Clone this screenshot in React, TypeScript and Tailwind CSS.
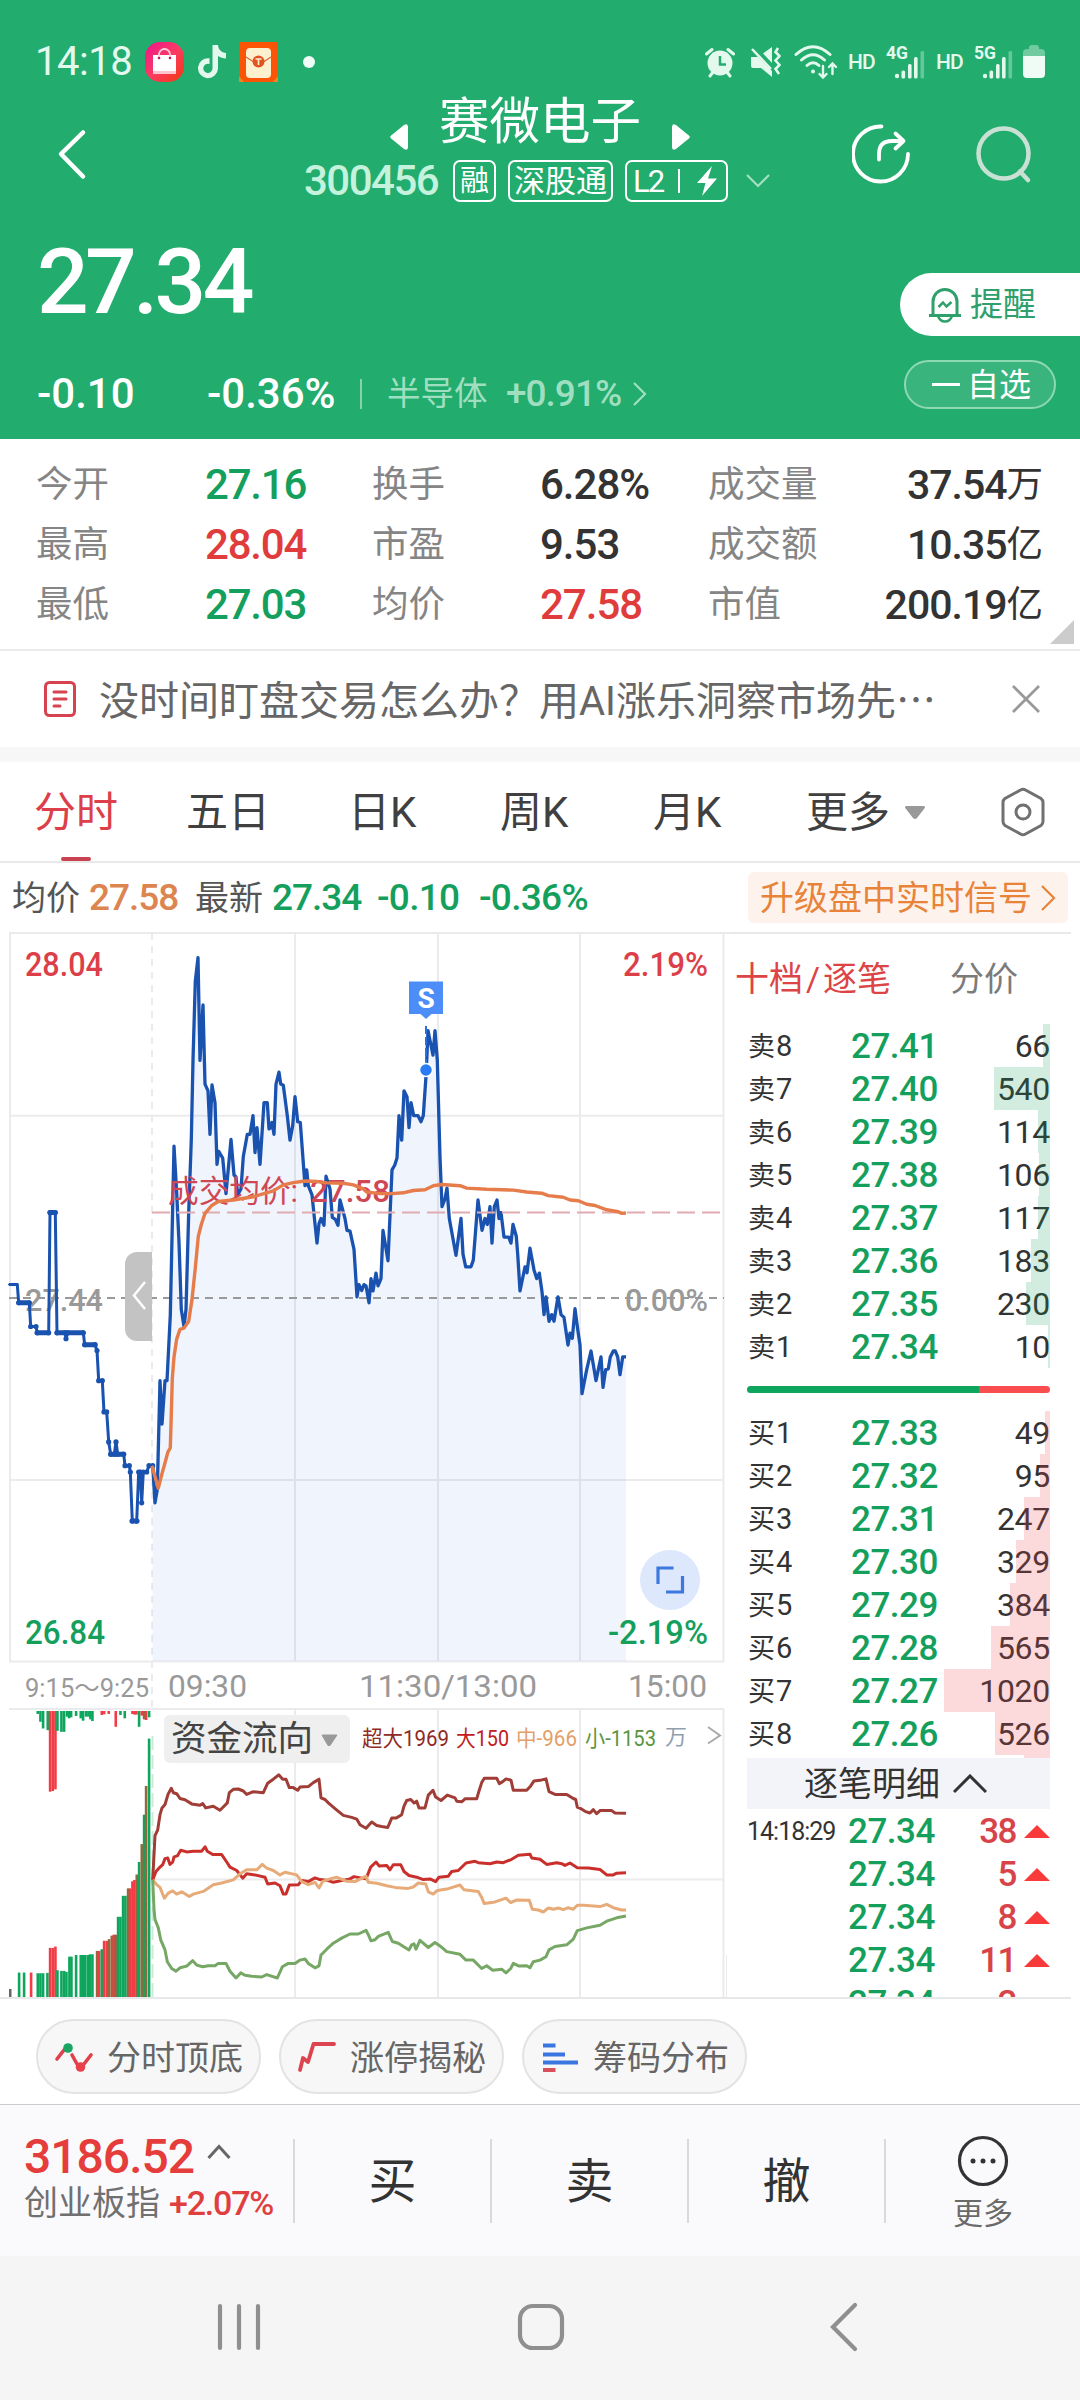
import type { ReactNode } from 'react';

type Pt = [number, number];

/* ---------- chart helpers ---------- */

const toPoints = (raw: string, shiftX: number, baseY: number, unitY: number): Pt[] =>
  raw
    .trim()
    .split(/\s+/)
    .map((p) => {
      const [x, y] = p.split(',').map(Number);
      return [shiftX + x / 3, baseY + y / unitY] as Pt;
    });

const toPath = (pts: Pt[]) =>
  pts.map(([x, y], i) => `${i ? 'L' : 'M'}${x.toFixed(1)} ${y.toFixed(1)}`).join('');

const PRICE_UNIT = 2.529;
const FLOW_UNIT = 2.958;
const morning = (raw: string) => toPoints(raw, 0, 920, PRICE_UNIT);
const afternoon = (raw: string) => toPoints(raw, 360, 920, PRICE_UNIT);
const flowA = (raw: string) => toPoints(raw, 0, 1480, FLOW_UNIT);
const flowB = (raw: string) => toPoints(raw, 340, 1480, FLOW_UNIT);

const auction = morning(
  '27,922 52,922 56,968 88,968 92,1028 108,1028 112,1044 146,1044 150,740 166,740 171,1044 195,1044 198,1059 203,1044 250,1044 254,1074 285,1074 291,1089 296,1165 307,1165 312,1244 320,1244 326,1320 332,1351 343,1351 348,1320 353,1351 371,1351 375,1380 388,1380 391,1396 397,1520 410,1520 416,1396 421,1396 425,1474 430,1396 440,1396 447,1380 458,1380',
);

const price = [
  ...morning(
    '458,1380 465,1474 472,1440 480,1165 486,1275 495,1165 501,1165 511,1000 522,572 530,690 537,815 544,985 552,1028 558,985 566,740 574,555 579,355 586,155 594,95 600,355 609,215 615,415 624,432 630,542 636,417 645,462 651,618 656,585 668,602 678,692 693,555 702,645 708,650 713,695 723,680 730,598 742,542 750,542 759,495 765,588 771,525 780,618 792,462 802,462 807,528 812,525 816,512 822,542 828,415 837,385 842,415 850,418 862,495 870,557 878,520 885,447 893,510 901,512 915,672 920,632 925,672 936,695 951,817 957,768 963,755 972,772 978,648 990,680 997,752 1006,757 1014,772 1020,708 1035,755 1041,785 1050,787 1062,833 1071,953 1077,922 1085,937 1092,922 1098,925',
  ),
  ...afternoon(
    '27,968 33,907 39,938 48,893 54,925 63,907 69,785 84,862 96,632 104,620 111,602 117,495 125,557 132,432 141,447 147,525 153,462 161,495 174,495 183,510 190,495 198,395 201,340 204,280 219,342 225,280 232,355 240,600 246,725 255,705 261,678 268,755 288,848 303,755 309,845 317,877 333,877 340,860 354,708 366,785 375,755 382,770 390,725 396,817 403,725 411,708 417,755 423,740 432,802 446,802 453,817 459,770 469,800 473,845 480,938 495,877 501,892 510,830 522,885 530,907 538,893 546,940 552,998 558,953 567,1015 575,998 582,1015 594,953 603,998 612,1005 624,1075 630,1045 637,1058 645,983 653,1035 660,1075 666,1198 680,1137 693,1090 708,1165 723,1105 729,1182 737,1137 745,1135 751,1105 760,1090 766,1090 773,1105 780,1150 788,1105 798,1105',
  ),
];

const average = [
  ...morning(
    '456,1380 475,1437 486,1400 496,1370 504,1345 511,1335 514,1250 517,1160 522,1105 530,1060 540,1035 552,1032 566,1015 576,960 586,880 595,800 604,770 615,742 635,722 655,712 700,708 760,700 820,685 850,670 880,664 915,660 950,661 980,665 1030,666 1060,670 1090,680',
  ),
  ...afternoon(
    '20,688 60,692 96,692 130,690 160,684 195,682 220,672 245,669 300,672 320,678 380,681 460,683 500,688 545,691 565,697 610,701 630,708 655,710 680,719 705,722 740,733 775,738 785,742 798,741',
  ),
];

const flows = [
  {
    color: '#a03d36',
    pts: [
      ...flowA(
        '458,1183 465,1052 473,1035 480,990 486,970 495,960 504,930 514,912 520,925 530,928 540,942 555,946 575,958 600,962 608,957 617,970 640,965 660,977 672,965 682,955 688,925 700,915 715,914 730,920 740,930 760,922 790,925 803,897 820,885 836,872 848,885 858,885 868,910 880,910 893,918 900,908 925,907 940,895 957,885 963,940 975,945 985,955 1005,972 1030,992 1055,998 1070,1003 1080,1020 1098,1030 1115,1012',
      ),
      ...flowB(
        '110,1022 125,1025 143,1028 155,1000 168,1000 185,990 192,965 200,948 212,945 222,955 230,950 237,970 255,970 265,932 279,918 287,938 303,948 322,932 345,940 350,950 365,952 375,943 410,943 417,920 425,895 433,882 470,882 478,898 488,892 498,884 513,888 520,918 560,918 572,905 582,890 605,887 618,884 627,922 645,930 680,930 700,942 707,945 712,968 722,972 735,980 750,985 760,975 770,987 780,978 815,978 825,985 858,986',
      ),
    ],
  },
  {
    color: '#c9302c',
    pts: [
      ...flowA(
        '458,1183 468,1158 480,1145 488,1138 495,1120 503,1118 510,1137 518,1130 522,1115 532,1112 542,1095 560,1100 580,1098 605,1098 615,1085 622,1098 638,1108 665,1108 680,1130 690,1145 710,1155 728,1178 740,1165 765,1168 795,1175 803,1195 825,1192 840,1200 850,1225 858,1225 868,1198 895,1197 905,1185 925,1188 945,1177 960,1182 985,1185 1000,1190 1050,1180 1062,1173 1098,1180 1112,1145',
      ),
      ...flowB(
        '108,1130 118,1142 140,1140 150,1153 160,1138 182,1138 192,1158 207,1170 230,1175 250,1182 270,1180 287,1188 297,1175 325,1172 335,1158 355,1155 378,1133 405,1128 415,1132 450,1135 470,1130 490,1132 515,1122 535,1110 570,1107 575,1118 600,1122 620,1137 650,1132 665,1135 675,1140 690,1133 712,1147 745,1148 780,1152 800,1168 820,1168 830,1163 858,1162',
      ),
    ],
  },
  {
    color: '#e6ab78',
    pts: [
      ...flowA(
        '458,1183 470,1197 480,1205 493,1237 505,1222 518,1215 530,1225 545,1218 568,1232 580,1225 610,1217 640,1197 665,1192 700,1183 720,1165 740,1153 770,1153 787,1137 800,1148 820,1155 840,1168 855,1160 890,1168 905,1188 925,1197 945,1190 957,1207 968,1187 990,1180 1010,1175 1040,1187 1065,1188 1098,1172',
      ),
      ...flowB(
        '85,1190 110,1193 140,1200 165,1205 205,1208 220,1204 235,1192 257,1195 265,1218 280,1225 292,1214 320,1210 360,1198 372,1212 415,1217 425,1235 433,1253 465,1248 498,1237 512,1250 530,1242 568,1243 577,1270 595,1272 610,1278 625,1266 640,1270 655,1266 670,1271 685,1265 700,1270 712,1258 730,1258 780,1262 800,1255 820,1265 845,1272 858,1272',
      ),
    ],
  },
  {
    color: '#76a765',
    pts: [
      ...flowA(
        '458,1183 462,1270 465,1300 475,1325 482,1360 495,1390 502,1425 515,1445 528,1453 540,1443 560,1438 578,1422 590,1435 608,1440 625,1437 645,1437 655,1430 678,1430 690,1453 708,1473 722,1458 735,1465 755,1468 785,1470 800,1463 832,1473 847,1440 865,1430 885,1430 900,1420 915,1417 925,1430 945,1443 957,1437 963,1405 980,1388 1000,1370 1025,1355 1050,1343 1075,1343 1098,1332 1105,1345',
      ),
      ...flowB(
        '93,1363 105,1360 115,1350 145,1338 157,1365 175,1370 207,1390 215,1375 222,1372 228,1388 240,1362 265,1383 285,1368 300,1378 320,1395 360,1403 378,1420 400,1420 425,1445 440,1437 458,1450 485,1447 498,1458 512,1445 520,1430 537,1438 560,1437 570,1443 580,1425 600,1420 618,1410 627,1390 645,1380 680,1375 700,1358 712,1333 740,1325 780,1317 800,1305 830,1295 858,1290',
      ),
    ],
  },
];

const G = '#0da65c';
const R = '#f23c45';
const M = '#94683f';

const risingBars: [number, number, string][] = [
  [57, 1457, G], [72, 1457, G], [93, 1457, R], [113, 1459, G], [121, 1459, G], [129, 1459, G], [142, 1458, G],
  [150, 1384, R], [158, 1384, R], [166, 1380, R], [172, 1450, G], [184, 1452, G], [192, 1452, G], [199, 1455, G],
  [208, 1410, G], [214, 1410, G], [228, 1405, G], [242, 1405, G], [248, 1405, G], [255, 1405, G], [263, 1405, G],
  [270, 1403, G], [277, 1403, G], [291, 1393, M], [297, 1393, R], [305, 1388, G], [312, 1363, R], [320, 1363, R],
  [327, 1358, M], [335, 1348, M], [341, 1345, R], [347, 1345, M], [354, 1292, G], [361, 1292, G], [369, 1230, G],
  [376, 1230, G], [384, 1208, M], [390, 1208, R], [397, 1187, R], [403, 1183, R], [410, 1167, M], [417, 1130, G],
  [425, 1077, M], [432, 990, G], [438, 905, M], [447, 765, G],
];

const hangingBars: [number, number, string][] = [
  [113, 692, G], [121, 715, G], [129, 735, G], [143, 740, G], [150, 922, R], [158, 920, R], [166, 915, R],
  [172, 742, G], [184, 745, G], [192, 745, G], [201, 700, G], [207, 705, G], [213, 702, G], [228, 698, G],
  [242, 705, G], [249, 712, G], [258, 700, G], [265, 700, G], [271, 708, G], [277, 713, G], [305, 695, R],
  [312, 693, R], [326, 692, R], [347, 730, R], [361, 695, G], [374, 705, G], [397, 692, R], [403, 694, R],
  [409, 694, R], [417, 730, G], [425, 697, R], [432, 708, M], [438, 710, R], [447, 702, G],
];

const flowY = (v: number) => 1480 + v / FLOW_UNIT;

function Label(p: { x: number; y: number; w: number; size: number; fill: string; children: ReactNode; weight?: number }) {
  return (
    <text
      x={p.x}
      y={p.y}
      fontSize={p.size}
      fontWeight={p.weight ?? 500}
      fill={p.fill}
      textLength={p.w}
      lengthAdjust="spacingAndGlyphs"
    >
      {p.children}
    </text>
  );
}

function Charts() {
  const area = `${toPath(price)}V1661H152.5Z`;
  return (
    <svg className="block shrink-0" width="730" height="1067" viewBox="0 932 730 1067">
      {/* grid */}
      <g stroke="#ebebed" strokeWidth="2" fill="none">
        <path d="M9 933H730M10 933V1662M723.500 933V1662M9 1661.500H724M9 1115.700H723M9 1480H723" />
        <path d="M295 933V1661M438 933V1661M580 933V1661" />
        <path d="M9 1709H724M723.500 1709V1998M295 1709V1998M438 1709V1998M580 1709V1998M152 1879.600H723" />
        <path d="M152 933V1709" strokeDasharray="7 6" />
      </g>
      <path d="M726.500 1955V1998" stroke="#ebebed" />

      <path d={area} fill="#2a6fe0" fillOpacity="0.075" />

      <Label x={25} y={1311} w={78} size={32} fill="#999">27.44</Label>
      <Label x={625} y={1311} w={83} size={32} fill="#999">0.00%</Label>
      <path d="M9 1298H724" stroke="#999" strokeWidth="2" strokeDasharray="8 6" />

      <path d={toPath(auction)} stroke="#1a52b0" strokeWidth="3" fill="none" strokeLinejoin="round" />
      {auction.map(([x, y], i) => (
        <circle key={i} cx={x} cy={y} r={i < 2 ? 1 : 2.6} fill="#1a52b0" />
      ))}
      <path
        d="M19 1302.800H29M37 1332.800H48M50 1212.600H55M57 1332.800H83M85 1344.700H95M111 1454.200H123M132 1521H137"
        stroke="#1a52b0"
        strokeWidth="5"
        strokeLinecap="round"
      />
      <path d={toPath(price)} stroke="#1a52b0" strokeWidth="3.300" fill="none" strokeLinejoin="round" />

      <path d="M152 1212.600H722" stroke="#e2abb2" strokeWidth="2" strokeDasharray="18 7" />
      <Label x={168} y={1202} w={130} size={31} fill="#cf4655" weight={400}>成交均价:</Label>
      <Label x={310} y={1202} w={80} size={32} fill="#cf4655">27.58</Label>
      <path d={toPath(average)} stroke="#e67c4a" strokeWidth="3.400" fill="none" strokeLinejoin="round" />

      {/* trade marker */}
      <path d="M426 1026V1063" stroke="#2a6fe0" strokeWidth="2" strokeDasharray="8 3" />
      <path d="M409 981.500H443V1014H431.500L426 1019L420.500 1014H409Z" fill="#4d8df7" />
      <text x="426" y="1008" fontSize="28" fontWeight="700" fill="#fff" textAnchor="middle">S</text>
      <circle cx="426" cy="1070" r="6.500" fill="#2a7cf5" stroke="#fff" strokeWidth="1.500" />

      <Label x={25} y={976} w={78} size={33} fill="#dc3f49">28.04</Label>
      <Label x={623} y={976} w={85} size={33} fill="#dc3f49">2.19%</Label>
      <Label x={25} y={1644} w={80} size={33} fill="#159f5d">26.84</Label>
      <Label x={608} y={1644} w={100} size={33} fill="#159f5d">-2.19%</Label>

      {/* collapse handle */}
      <path d="M152 1252H137A12 12 0 0 0 125 1264V1329A12 12 0 0 0 137 1341H152Z" fill="#c3c3c3" />
      <path d="M145 1282L134 1295.500L145 1309" stroke="#fff" strokeWidth="2.500" fill="none" />

      {/* full-screen button */}
      <circle cx="670" cy="1580" r="30" fill="#dde8fd" />
      <path d="M673.500 1568H658V1584M666 1592H682.500V1576" stroke="#3c78de" strokeWidth="3.200" fill="none" />

      {/* time axis */}
      <Label x={25} y={1697} w={124} size={25} fill="#999" weight={400}>9:15～9:25</Label>
      <Label x={168} y={1697} w={79} size={32} fill="#999" weight={400}>09:30</Label>
      <Label x={359} y={1697} w={178} size={32} fill="#999" weight={400}>11:30/13:00</Label>
      <Label x={628} y={1697} w={79} size={32} fill="#999" weight={400}>15:00</Label>

      {/* call auction volume */}
      {hangingBars.map(([x, y, c]) => (
        <rect key={x} x={x / 3 - 1.2} y={1711} width="2.600" height={flowY(y) - 1711} fill={c} />
      ))}
      {risingBars.map(([x, y, c]) => (
        <rect key={x} x={x / 3 - 1.2} y={flowY(y)} width="2.600" height={1997.5 - flowY(y)} fill={c} />
      ))}
      <rect x="9" y="1989" width="2.500" height="9" fill="#666" />
      <path d="M152.500 1736V1997" stroke="#c9ecd9" strokeWidth="2" strokeDasharray="14 5" />

      {flows.map((f) => (
        <path key={f.color} d={toPath(f.pts)} stroke={f.color} strokeWidth="3" fill="none" strokeLinejoin="round" />
      ))}

      {/* flow selector and legend */}
      <rect x="164" y="1715" width="186" height="48" rx="6" fill="#efefef" />
      <Label x={171} y={1751} w={142} size={35.5} fill="#444" weight={400}>资金流向</Label>
      <path d="M322 1735H337L330 1745.500H328Z" fill="#999" stroke="#999" strokeLinejoin="round" />
      <Label x={362} y={1745.5} w={87} size={21.5} fill="#8f2a24" weight={400}>超大1969</Label>
      <Label x={456} y={1745.5} w={53} size={21.5} fill="#c02020" weight={400}>大150</Label>
      <Label x={516} y={1745.5} w={61} size={21.5} fill="#e3a068" weight={400}>中-966</Label>
      <Label x={585} y={1745.5} w={71} size={21.5} fill="#5b9440" weight={400}>小-1153</Label>
      <Label x={665} y={1744} w={22} size={21} fill="#8f9fb0" weight={400}>万</Label>
      <path d="M708 1727L720 1735.500L708 1743.500" stroke="#aaa" strokeWidth="2" fill="none" />
      <path d="M0 1998H730" stroke="#e8e8ea" strokeWidth="2" />
    </svg>
  );
}

/* ---------- status bar ---------- */

function Signal({ tag }: { tag: string }) {
  return (
    <svg className="overflow-visible" width="40" height="36" viewBox="0 0 40 36" fill="#e4f9ee">
      <text x="0" y="15" fontSize="18" fontWeight="700" textLength="22" lengthAdjust="spacingAndGlyphs">{tag}</text>
      <circle cx="11" cy="32" r="2.200" />
      <rect x="15.500" y="26.500" width="3.600" height="8" rx="1.500" />
      <rect x="22" y="20" width="3.600" height="14.500" rx="1.500" />
      <rect x="28" y="13" width="3.600" height="21.500" rx="1.500" />
      <rect x="34.500" y="7" width="3.600" height="27.500" rx="1.500" opacity=".35" />
    </svg>
  );
}

function StatusBar() {
  return (
    <div className="mt-[32px] flex h-[60px] shrink-0 items-center pl-[35px] text-[#e4f9ee]">
      <span className="w-[110px] text-[40px] leading-none tracking-[-0.500px]">14:18</span>
      <svg width="39" height="40" viewBox="0 0 39 40">
        <defs>
          <linearGradient id="bag" x1="0" y1="0" x2="1" y2="1">
            <stop offset="0" stopColor="#ee1290" />
            <stop offset=".5" stopColor="#fb3b63" />
            <stop offset="1" stopColor="#f2390c" />
          </linearGradient>
        </defs>
        <rect width="39" height="40" rx="15" fill="url(#bag)" />
        <path d="M8 13H31V32H8Z" fill="#fff" />
        <path d="M14 15V12.500A5.500 5.500 0 0 1 25 12.500V15" stroke="#fcd" strokeWidth="1.800" fill="none" />
        <path d="M8 29H31V32H8Z" fill="#fbc5cf" />
        <circle cx="14" cy="16" r="1.300" fill="#c2185b" />
        <circle cx="25" cy="16" r="1.300" fill="#c2185b" />
      </svg>
      <svg className="ml-[14px]" width="28" height="34" viewBox="0 0 28 34" fill="#e4f9ee">
        <path d="M14.500 0H20C20.300 4.500 23.500 7.700 28 8V13.500C25 13.500 22.300 12.600 20 11V23.500A10 10 0 1 1 11.500 13.300V19A4.600 4.600 0 1 0 14.500 23.300Z" />
      </svg>
      <svg className="ml-[13px]" width="39" height="40" viewBox="0 0 39 40">
        <rect width="39" height="40" fill="#fb5406" />
        <path d="M0 34L5 40H0ZM39 34L34 40H39Z" fill="#e88a1c" />
        <rect x="7" y="6" width="25" height="30" rx="4" fill="#fdf0cf" />
        <path d="M7 15L19.500 23L32 15" stroke="#d9632b" strokeWidth="1.200" fill="none" />
        <circle cx="19.500" cy="19.500" r="6" fill="#e2531f" />
        <path d="M16.500 17H22.500M19.500 17V23" stroke="#fdf0cf" strokeWidth="1.600" />
      </svg>
      <span className="ml-[25px] size-3 rounded-full bg-[#effdf6]" />

      <svg className="ml-[390px]" width="30" height="32" viewBox="0 0 30 32" fill="#e4f9ee">
        <circle cx="15" cy="17" r="12.500" />
        <path d="M1.500 8L7 3.500M28.500 8L23 3.500M5 30L8 26M25 30L22 26" stroke="#e4f9ee" strokeWidth="3" strokeLinecap="round" />
        <path d="M15 10V18.500H21" stroke="#22ac6e" strokeWidth="2.500" fill="none" />
      </svg>
      <svg className="ml-[15px]" width="31" height="32" viewBox="0 0 31 32" fill="#e4f9ee">
        <path d="M1 11H8L22 25V31L11 22H3Q1 22 1 20Z" />
        <path d="M13 7.500L22 1V17Z" />
        <path d="M2 3L21 23" stroke="#e4f9ee" strokeWidth="2.500" />
        <path d="M28 2L25.500 6L29.500 10L25.500 14.500L29.500 19L25.500 23L29 28" stroke="#e4f9ee" strokeWidth="2.600" fill="none" />
      </svg>
      <svg className="ml-[13px]" width="44" height="36" viewBox="0 0 44 36" fill="none" stroke="#e4f9ee" strokeWidth="3" strokeLinecap="round">
        <path d="M2 10.500Q19 -5 36 10.500" />
        <path d="M7.500 16Q19 5.500 30.500 16" />
        <path d="M13 21.500Q19 16 25 21.500" />
        <circle cx="19" cy="27.500" r="2" fill="#e4f9ee" stroke="none" />
        <path d="M29 22V33M25.500 30L29 33.500L32.500 30M38.500 30V20M35 23L38.500 19.500L42 23" strokeWidth="2.400" />
      </svg>
      <span className="ml-[10px] w-[38px] text-[21px] font-medium leading-none tracking-[-1px]">HD</span>
      <Signal tag="4G" />
      <span className="ml-[10px] w-[38px] text-[21px] font-medium leading-none tracking-[-1px]">HD</span>
      <Signal tag="5G" />
      <svg className="ml-[9px]" width="22" height="34" viewBox="0 0 22 34">
        <path d="M6 3Q6 0 9 0H13Q16 0 16 3V4H18Q22 4 22 8V12H0V8Q0 4 4 4H6Z" fill="#70cba0" />
        <path d="M0 11H22V29Q22 33 18 33H4Q0 33 0 29Z" fill="#eefcf5" />
      </svg>
    </div>
  );
}

/* ---------- header ---------- */

function Header() {
  return (
    <header className="flex h-[439px] shrink-0 flex-col bg-[#22ac6e] text-white">
      <StatusBar />
      <div className="grid h-[124px] shrink-0 grid-cols-[306px_464px_310px]">
        <div className="flex items-center pl-[56px]">
          <svg width="31" height="52" viewBox="0 0 31 52" fill="none" stroke="#fff" strokeWidth="4.500" strokeLinecap="round" strokeLinejoin="round">
            <path d="M27 4.500L5 26L27 48.500" />
          </svg>
        </div>
        <div>
          <div className="flex h-[58px] items-center pl-[84px]">
            <svg className="mt-[32px]" width="18" height="26" viewBox="0 0 18 26" fill="#fff"><path d="M0 13Q1 11 3 10L14 1Q18 -1 18 3V23Q18 27 14 25L3 16Q1 15 0 13Z" /></svg>
            <span className="mt-[2px] ml-[31px] text-[50.500px] leading-none whitespace-nowrap">赛微电子</span>
            <svg className="mt-[32px] ml-[31px]" width="18" height="26" viewBox="0 0 18 26" fill="#fff"><path d="M18 13Q17 11 15 10L4 1Q0 -1 0 3V23Q0 27 4 25L15 16Q17 15 18 13Z" /></svg>
          </div>
          <div className="flex h-[62px] items-center text-[29px] leading-none">
            <span className="-ml-[2px] w-[149px] text-[42px] font-medium tracking-[-1.500px] text-[#c5f2dc]">300456</span>
            <span className="flex h-[42px] w-[43px] items-center justify-center rounded-[7px] border-2 border-white">融</span>
            <span className="ml-3 flex h-[42px] w-[105px] items-center justify-center rounded-[7px] border-2 border-white text-[31px] whitespace-nowrap">深股通</span>
            <span className="ml-3 flex h-[42px] w-[103px] items-center rounded-[7px] border-2 border-white pl-[6px]">
              <span className="w-[45px] text-[31px] tracking-[-2px]">L2</span>
              <span className="h-6 w-[2px] bg-white" />
              <svg className="ml-[17px]" width="20" height="30" viewBox="0 0 20 30" fill="#fff"><path d="M15 0L0 17H8.500L5 30L20 12.500H11Z" /></svg>
            </span>
            <svg className="ml-[18px]" width="24" height="14" viewBox="0 0 24 14" fill="none" stroke="#a5e0c4" strokeWidth="2.200"><path d="M1 1L12 12L23 1" /></svg>
          </div>
        </div>
        <div className="flex items-center pl-[82px]">
          <svg width="58" height="60" viewBox="0 0 58 60" fill="none" stroke="#fff" strokeWidth="3.800" strokeLinecap="round" strokeLinejoin="round">
            <path d="M29.500 2.500A27.500 27.500 0 1 0 56 30" />
            <path d="M27 35.500V30C27 21 32 17 40 17H50M43.500 9.500L51.500 17L43.500 24.500" />
          </svg>
          <svg className="ml-[65px]" width="58" height="60" viewBox="0 0 58 60" fill="none" stroke="#c9e0d4" strokeWidth="4.500" strokeLinecap="round">
            <circle cx="28.500" cy="29.500" r="25" />
            <path d="M45 47.500L53 56" />
          </svg>
        </div>
      </div>
      <div className="flex h-[223px] shrink-0 justify-between">
        <div>
          <div className="flex h-[132px] items-center pl-[37px] text-[91px] font-medium leading-none tracking-[-3.700px]">27.34</div>
          <div className="flex h-[91px] items-center pl-[37px] leading-none">
            <span className="w-[170px] text-[42px] font-medium">-0.10</span>
            <span className="w-[153px] text-[42px] font-medium">-0.36%</span>
            <span className="h-[30px] w-[2px] bg-[#85d3ae]" />
            <span className="ml-[25px] w-[119px] text-[33.500px] text-[#9fdfc0]">半导体</span>
            <span className="w-[127px] text-[37px] font-medium tracking-[-1px] text-[#9fdfc0]">+0.91%</span>
            <svg width="14" height="24" viewBox="0 0 14 24" fill="none" stroke="#9fdfc0" strokeWidth="2.200"><path d="M1 1L12 12L1 23" /></svg>
          </div>
        </div>
        <div className="w-[180px] pt-[57px]">
          <div className="flex h-[63px] items-center rounded-l-full bg-white pl-[28px] text-[33px] leading-none text-[#2f9f6b]">
            <svg width="34" height="36" viewBox="0 0 34 36" fill="none" stroke="#2f9f6b" strokeWidth="3">
              <path d="M5 28V14.500A12 12 0 0 1 29 14.500V28" />
              <path d="M1 28.500H33" />
              <path d="M10 29Q12 34.500 17 34.500T24 29" strokeWidth="2.500" />
              <path d="M10.500 20L15 15.500L18.500 19.500L23.500 15" strokeWidth="2.500" />
            </svg>
            <span className="ml-[8px]">提醒</span>
          </div>
          <div className="mt-6 ml-1 flex h-[49px] w-[152px] items-center rounded-full border-2 border-[#8ed8b4] bg-[#39b47d] pl-[26px] text-[32px] leading-none">
            <span className="h-[3px] w-[28px] bg-white" />
            <span className="ml-[7px]">自选</span>
          </div>
        </div>
      </div>
    </header>
  );
}

/* ---------- stats ---------- */

const stats = [
  ['今开', '27.16', 'text-[#159f5d]', '换手', '6.28%', 'text-[#333]', '成交量', '37.54', '万'],
  ['最高', '28.04', 'text-[#e03c3c]', '市盈', '9.53', 'text-[#333]', '成交额', '10.35', '亿'],
  ['最低', '27.03', 'text-[#159f5d]', '均价', '27.58', 'text-[#e03c3c]', '市值', '200.19', '亿'],
];

function Stats() {
  return (
    <section className="relative h-[212px] shrink-0 border-b-2 border-[#ebebeb] pt-[16px]">
      {stats.map((s) => (
        <div key={s[0]} className="grid h-[60px] grid-cols-[169px_167px_168px_168px_140px_195px] items-center pl-[36px] text-[36.500px] leading-none text-[#858585]">
          <span>{s[0]}</span>
          <span className={`text-[42px] font-medium tracking-[-1.200px] ${s[2]}`}>{s[1]}</span>
          <span>{s[3]}</span>
          <span className={`text-[42px] font-medium tracking-[-1px] ${s[5]}`}>{s[4]}</span>
          <span className="whitespace-nowrap">{s[6]}</span>
          <span className="flex items-center justify-end text-[#333]">
            <span className="text-[41px] font-medium tracking-[-1px]">{s[7]}</span>
            {s[8]}
          </span>
        </div>
      ))}
      <svg className="absolute right-[6px] bottom-[5px]" width="24" height="24" viewBox="0 0 24 24" fill="#ccc"><path d="M24 0V24H0Z" /></svg>
    </section>
  );
}

function News() {
  return (
    <section className="flex h-[111px] shrink-0 items-center border-b-[15px] border-[#f7f7f7] pl-[44px]">
      <svg width="32" height="36" viewBox="0 0 32 36" fill="none" stroke="#d6434f" strokeWidth="3" strokeLinecap="round">
        <rect x="1.500" y="1.500" width="29" height="33" rx="4" />
        <path d="M10 11H22M10 18H22M10 25H16" />
      </svg>
      <span className="mt-[6px] ml-[23px] w-[913px] text-[40px] leading-none whitespace-nowrap text-[#666]">没时间盯盘交易怎么办？用AI涨乐洞察市场先⋯</span>
      <svg width="28" height="28" viewBox="0 0 28 28" stroke="#999" strokeWidth="2.800"><path d="M1 1L27 27M27 1L1 27" /></svg>
    </section>
  );
}

function Tabs() {
  return (
    <nav className="flex h-[101px] shrink-0 items-center border-b-2 border-[#e9e9e9] pl-[34px] text-[42px] leading-none text-[#404040]">
      <span className="relative w-[152px] pt-[3px] text-[#dc3f49]">
        分时
        <span className="absolute top-[68px] left-[27px] h-[4px] w-[30px] rounded-full bg-[#c9424f]" />
      </span>
      <span className="w-[162px] pt-[3px]">五日</span>
      <span className="w-[152px] pt-[3px]">日K</span>
      <span className="w-[153px] pt-[3px]">周K</span>
      <span className="w-[153px] pt-[3px]">月K</span>
      <span className="w-[98px] pt-[3px]">更多</span>
      <svg className="mt-[3px]" width="22" height="14" viewBox="0 0 22 14" fill="#999"><path d="M2 0H20Q22 1 20 3L13 12Q11 14 9 12L2 3Q0 1 2 0Z" /></svg>
      <svg className="ml-[75px]" width="44" height="50" viewBox="0 0 44 50" fill="none" stroke="#707070" strokeWidth="3">
        <path d="M19.500 3Q22 1.500 24.500 3L40 11.500Q42 13 42 15.500V34.500Q42 37 40 38.500L24.500 47Q22 48.500 19.500 47L4 38.500Q2 37 2 34.500V15.500Q2 13 4 11.500Z" />
        <circle cx="22" cy="25" r="7" />
      </svg>
    </nav>
  );
}

function QuoteLine() {
  return (
    <div className="flex h-[69px] shrink-0 items-center pl-[12px] text-[34px] leading-none text-[#555]">
      <span className="w-[77px]">均价</span>
      <span className="w-[106px] text-[37px] font-medium tracking-[-1px] text-[#dc8550]">27.58</span>
      <span className="w-[77px]">最新</span>
      <span className="w-[105px] text-[37px] font-medium tracking-[-1px] text-[#159f5d]">27.34</span>
      <span className="w-[102px] text-[37px] font-medium tracking-[-0.700px] text-[#159f5d]">-0.10</span>
      <span className="w-[269px] text-[37px] font-medium tracking-[-0.700px] text-[#159f5d]">-0.36%</span>
      <span className="flex h-[51px] w-[320px] items-center rounded-md bg-[#fef3ec] pl-[12px] whitespace-nowrap text-[#e8833a]">
        升级盘中实时信号
        <svg className="ml-[9px]" width="15" height="26" viewBox="0 0 15 26" fill="none" stroke="#e8833a" strokeWidth="2.200"><path d="M1 1L13 13L1 25" /></svg>
      </span>
    </div>
  );
}

/* ---------- order book ---------- */

type Level = { side: string; price: string; vol: number; w: number };

const sells: Level[] = [
  { side: '卖8', price: '27.41', vol: 66, w: 7 },
  { side: '卖7', price: '27.40', vol: 540, w: 56 },
  { side: '卖6', price: '27.39', vol: 114, w: 12 },
  { side: '卖5', price: '27.38', vol: 106, w: 11 },
  { side: '卖4', price: '27.37', vol: 117, w: 12 },
  { side: '卖3', price: '27.36', vol: 183, w: 19 },
  { side: '卖2', price: '27.35', vol: 230, w: 24 },
  { side: '卖1', price: '27.34', vol: 10, w: 2 },
];

const buys: Level[] = [
  { side: '买1', price: '27.33', vol: 49, w: 5 },
  { side: '买2', price: '27.32', vol: 95, w: 10 },
  { side: '买3', price: '27.31', vol: 247, w: 26 },
  { side: '买4', price: '27.30', vol: 329, w: 34 },
  { side: '买5', price: '27.29', vol: 384, w: 40 },
  { side: '买6', price: '27.28', vol: 565, w: 59 },
  { side: '买7', price: '27.27', vol: 1020, w: 106 },
  { side: '买8', price: '27.26', vol: 526, w: 55 },
];

function LevelRow({ level, tint }: { level: Level; tint: string }) {
  return (
    <div className="relative flex h-[43px] items-center pt-px pl-[1px] leading-none text-[#333]">
      <span className="w-[103px] text-[27px] whitespace-nowrap">
        {level.side[0]}
        <span className="ml-[1px] text-[29px]">{level.side[1]}</span>
      </span>
      <span className="text-[35px] font-medium tracking-[-0.500px] text-[#159f5d]">{level.price}</span>
      <span className="flex-1 text-right text-[32px] tracking-[-0.300px]">{level.vol}</span>
      <span className={`absolute inset-y-0 right-0 ${tint}`} style={{ width: level.w }} />
    </div>
  );
}

function OrderBook() {
  return (
    <aside className="h-[1067px] w-[341px] overflow-hidden border-t-2 border-b-2 border-[#e8e8ea]">
      <div className="flex h-[90px] items-center pl-[5px] text-[34px] leading-none text-[#dc4446]">
        <span className="w-[215px] whitespace-nowrap">十档<span className="mx-[3px]">/</span>逐笔</span>
        <span className="text-[#7b7b7b]">分价</span>
      </div>
      <div className="ml-[17px] w-[303px]">
        {sells.map((l) => <LevelRow key={l.side} level={l} tint="bg-[#109c5c]/[0.19]" />)}
        <div className="my-[18px] flex h-[7px] overflow-hidden rounded-full">
          <span className="w-[232px] bg-[#0da65c]" />
          <span className="flex-1 bg-[#f94d4f]" />
        </div>
        {buys.map((l) => <LevelRow key={l.side} level={l} tint="bg-[#f0404a]/[0.2]" />)}
        <div className="ml-auto h-[3px] w-[26px] bg-[#fcd9db]" />
        <div className="flex h-[51px] items-center bg-[#f2f4f9] pl-[57px] text-[34px] leading-none text-[#333]">
          逐笔明细
          <svg className="ml-[13px]" width="34" height="20" viewBox="0 0 34 20" fill="none" stroke="#333" strokeWidth="3"><path d="M1 18L17 2L33 18" /></svg>
        </div>
        {['38', '5', '8', '11', '2'].map((v, i) => (
          <div key={v} className="flex h-[43px] items-center pt-px leading-none">
            <span className="w-[101px] text-[25px] tracking-[-1px] text-[#333]">{i === 0 ? '14:18:29' : ''}</span>
            <span className="text-[35px] font-medium tracking-[-0.500px] text-[#159f5d]">27.34</span>
            <span className="flex-1 text-right text-[35px] font-medium tracking-[-1.500px] text-[#d8434a]">{v}</span>
            <svg className="ml-[8px]" width="26" height="13" viewBox="0 0 26 13" fill="#f93a3a"><path d="M0 13L13 0L26 13Z" /></svg>
          </div>
        ))}
      </div>
    </aside>
  );
}

/* ---------- footer ---------- */

function Chip({ label, children }: { label: string; children: ReactNode }) {
  return (
    <span className="flex h-[75px] w-[225px] items-center rounded-full border-2 border-[#e3e3e3] bg-[#f7f7f7] pl-[16px] text-[34px] leading-none whitespace-nowrap text-[#666]">
      {children}
      <span className="mt-[3px] ml-[13px]">{label}</span>
    </span>
  );
}

function Chips() {
  return (
    <div className="flex h-[106px] shrink-0 gap-[18px] border-b border-[#ccc] pt-[20px] pl-[36px]">
      <Chip label="分时顶底">
        <svg width="40" height="32" viewBox="0 0 40 32" fill="none" stroke="#e0404c" strokeWidth="3.600" strokeLinecap="round">
          <path d="M3 18L10 9M18 14L23 23M30 23L37 14" />
          <circle cx="14" cy="7" r="4.800" fill="#1aa564" stroke="none" />
          <circle cx="26.500" cy="26" r="4.800" fill="#e8414c" stroke="none" />
        </svg>
      </Chip>
      <Chip label="涨停揭秘">
        <svg width="40" height="32" viewBox="0 0 40 32" fill="none" stroke="#dc4450" strokeWidth="3.800" strokeLinecap="round" strokeLinejoin="round">
          <path d="M3 29L6 17L11 21L16.500 3H37" />
        </svg>
      </Chip>
      <Chip label="筹码分布">
        <svg width="40" height="32" viewBox="0 0 40 32" stroke="#3a76e0" strokeWidth="4">
          <path d="M3 4.500H15.500M3 13.500H25M3 21.500H38" />
          <path d="M3 29H15.500" stroke="#d9505c" />
        </svg>
      </Chip>
    </div>
  );
}

function TradeBar() {
  return (
    <div className="flex h-[151px] shrink-0 items-center bg-[#fafafc] leading-none">
      <div className="h-full w-[293px] pl-[24px]">
        <div className="flex h-[76px] items-end">
          <span className="text-[48px] font-medium tracking-[-1px] text-[#e43d3b]">3186.52</span>
          <svg className="mb-[21px] ml-[13px]" width="24" height="16" viewBox="0 0 24 16" fill="none" stroke="#666" strokeWidth="3"><path d="M1.500 14L12 2.500L22.500 14" /></svg>
        </div>
        <div className="mt-[4px] flex h-[36px] items-center whitespace-nowrap">
          <span className="text-[34px] text-[#707070]">创业板指</span>
          <span className="ml-[9px] text-[34px] font-medium tracking-[-1.200px] text-[#e03f3f]">+2.07%</span>
        </div>
      </div>
      {['买', '卖', '撤'].map((t) => (
        <div key={t} className="flex h-[84px] w-[197px] items-center justify-center border-l-2 border-[#d9d9dc] pt-[3px] text-[48px] text-[#333]">{t}</div>
      ))}
      <div className="flex h-[84px] flex-1 flex-col items-center border-l-2 border-[#d9d9dc] text-[30px] text-[#6a6a6a]">
        <svg className="-mt-[4px] shrink-0" width="52" height="52" viewBox="0 0 52 52" fill="none" stroke="#333" strokeWidth="3.200">
          <circle cx="26" cy="26" r="23.500" />
          <g fill="#333" stroke="none"><circle cx="16" cy="26" r="2.500" /><circle cx="26" cy="26" r="2.500" /><circle cx="36" cy="26" r="2.500" /></g>
        </svg>
        <span className="mt-[12px]">更多</span>
      </div>
    </div>
  );
}

function SystemNav() {
  return (
    <div className="flex h-[144px] shrink-0 items-center bg-[#f5f5f5] pl-[217px] pb-[2px]">
      <svg width="44" height="48" viewBox="0 0 44 48" stroke="#8f8f8f" strokeWidth="4.200" strokeLinecap="round"><path d="M3 3V45M22 3V45M41 3V45" /></svg>
      <svg className="ml-[256px]" width="48" height="48" viewBox="0 0 48 48" fill="none" stroke="#8f8f8f" strokeWidth="4.200"><rect x="3" y="3" width="42" height="42" rx="13" /></svg>
      <svg className="ml-[264px]" width="32" height="50" viewBox="0 0 32 50" fill="none" stroke="#8f8f8f" strokeWidth="4.200" strokeLinecap="round"><path d="M26 3L4 25L26 47" /></svg>
    </div>
  );
}

export default function App() {
  return (
    <main className="flex h-[2400px] w-[1080px] flex-col overflow-hidden bg-white font-['Roboto','Noto_Sans_CJK_SC',sans-serif]">
      <Header />
      <Stats />
      <News />
      <Tabs />
      <QuoteLine />
      <div className="flex h-[1067px] shrink-0">
        <Charts />
        <OrderBook />
      </div>
      <Chips />
      <TradeBar />
      <SystemNav />
    </main>
  );
}
